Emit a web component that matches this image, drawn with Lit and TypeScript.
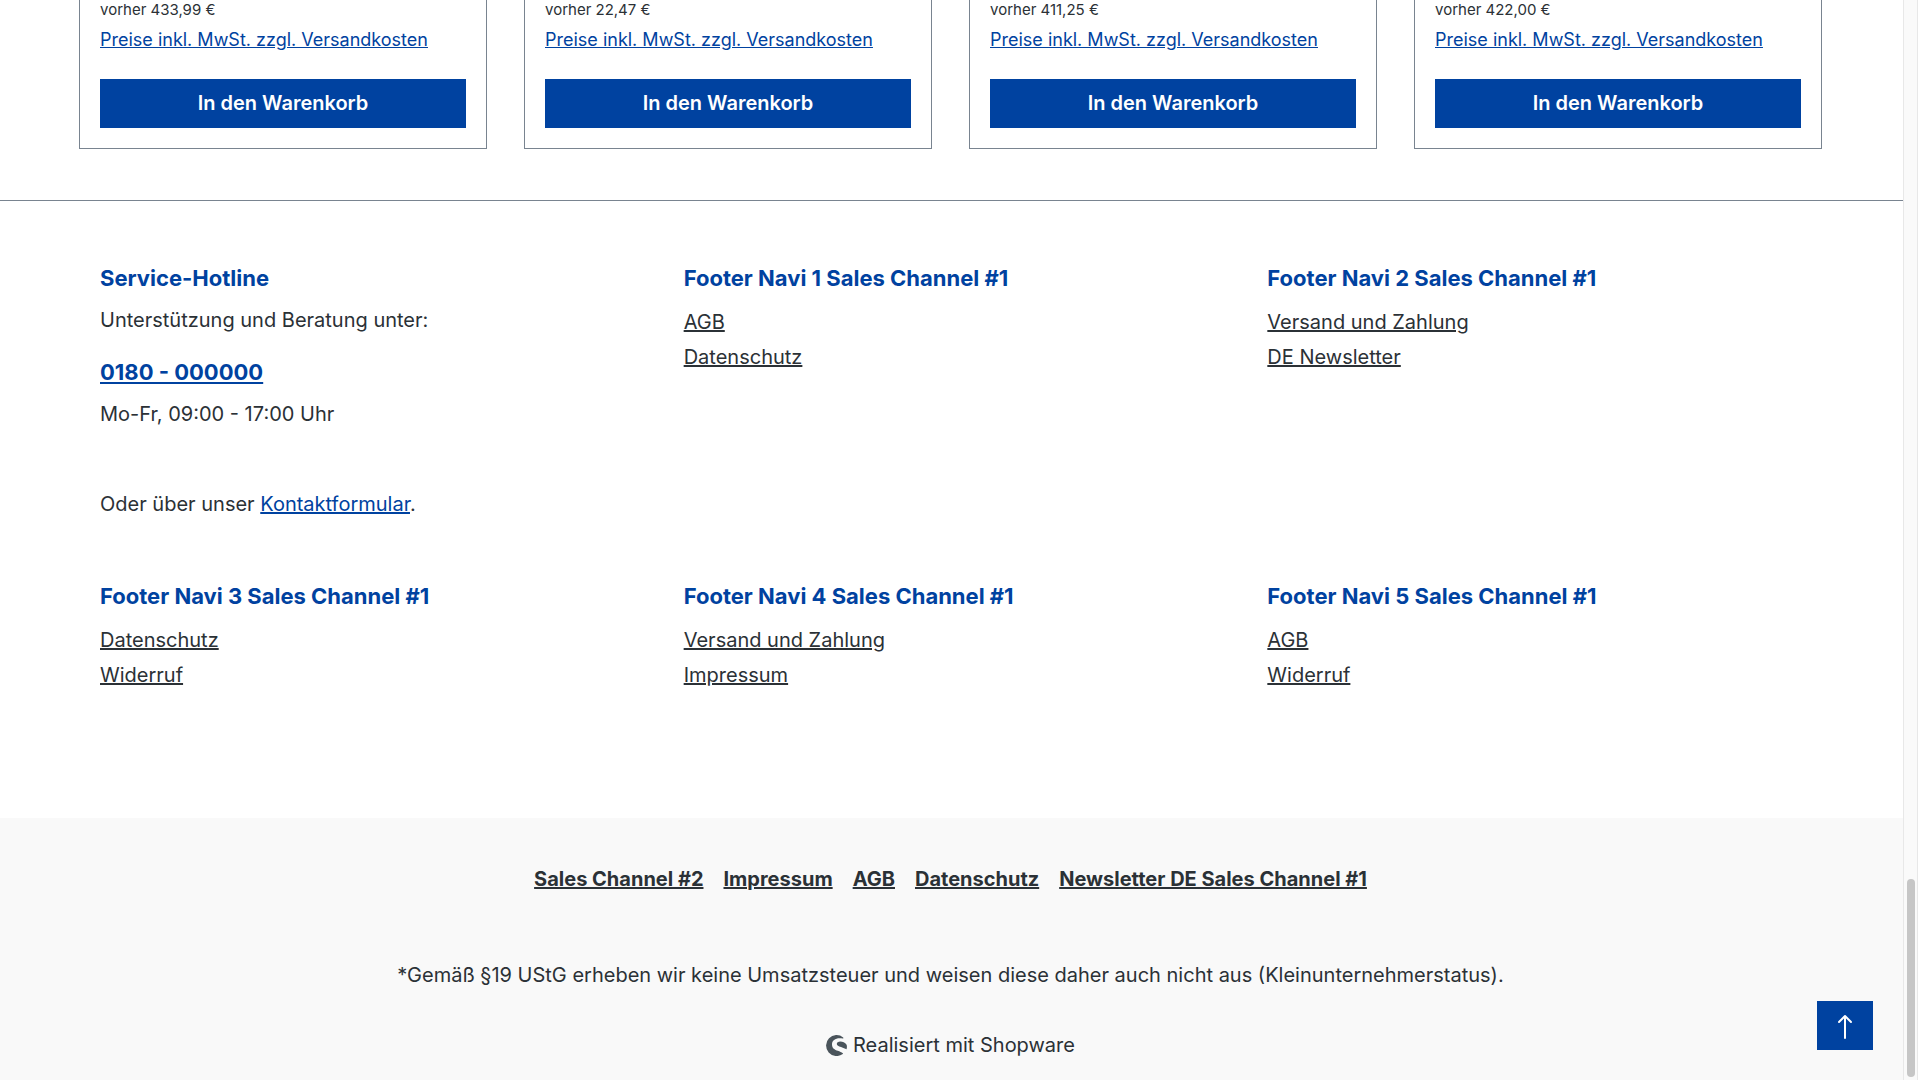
import { LitElement, html, css } from "lit";
import { customElement } from "lit/decorators.js";

const PRICES = ["433,99 €", "22,47 €", "411,25 €", "422,00 €"];

const NAVI = [
  { title: "Footer Navi 1 Sales Channel #1", links: ["AGB", "Datenschutz"] },
  { title: "Footer Navi 2 Sales Channel #1", links: ["Versand und Zahlung", "DE Newsletter"] },
  { title: "Footer Navi 3 Sales Channel #1", links: ["Datenschutz", "Widerruf"] },
  { title: "Footer Navi 4 Sales Channel #1", links: ["Versand und Zahlung", "Impressum"] },
  { title: "Footer Navi 5 Sales Channel #1", links: ["AGB", "Widerruf"] },
];

const SERVICE_LINKS = [
  "Sales Channel #2",
  "Impressum",
  "AGB",
  "Datenschutz",
  "Newsletter DE Sales Channel #1",
];

@customElement("app-root")
export class AppRoot extends LitElement {
  static styles = css`
    :host {
      display: grid;
      grid-template-columns: minmax(0, 1fr) 17px;
      min-height: 100vh;
      background: #fff;
      color: #2b3136;
      font: 400 20px/30px Inter, "Liberation Sans", sans-serif;
    }
    * {
      box-sizing: border-box;
    }
    p,
    h2,
    ul {
      margin: 0;
      padding: 0;
    }
    ul {
      list-style: none;
    }
    a {
      color: inherit;
    }
    .page {
      display: flex;
      flex-direction: column;
    }
    .products {
      display: grid;
      grid-template-columns: repeat(4, minmax(0, 1fr));
      gap: 37px;
      padding: 0 81px 51px 79px;
    }
    .card {
      display: flex;
      flex-direction: column;
      padding: 0 20px 20px;
      border: 1px solid #798490;
      border-top: 0;
    }
    .before {
      font-size: 15px;
      line-height: 20px;
    }
    .tax {
      margin-top: 8px;
      font-size: 18px;
      line-height: 24px;
    }
    .accent {
      color: #0042a0;
    }
    .buy {
      margin-top: 27px;
      height: 49px;
      padding: 0 0 2px;
      border: 0;
      border-radius: 0;
      background: #0042a0;
      color: #fff;
      font: 600 20px/30px Inter, "Liberation Sans", sans-serif;
    }
    .navi {
      display: grid;
      grid-template-columns: repeat(3, minmax(0, 1fr));
      row-gap: 61px;
      padding: 61px 76px 123px;
      border-top: 1px solid #798490;
    }
    .column {
      padding: 0 24px;
    }
    .title {
      font-size: 22px;
      line-height: 32px;
      font-weight: 700;
      color: #0042a0;
    }
    .list {
      padding-top: 13px;
    }
    .list li {
      height: 35px;
    }
    .hotline {
      padding-top: 11px;
    }
    .phone {
      display: block;
      width: fit-content;
      margin: 21px 0 11px;
      font-size: 22px;
      line-height: 32px;
      font-weight: 700;
      color: #0042a0;
    }
    .contact {
      margin-top: 60px;
    }
    .bottom {
      flex: 1;
      display: flex;
      flex-direction: column;
      align-items: center;
      padding: 46px 22px 18px 20px;
      background: #f9f9f9;
    }
    .service {
      display: flex;
      gap: 20px;
      font-weight: 700;
    }
    .note {
      margin-top: 66px;
    }
    .brand {
      display: flex;
      align-items: center;
      gap: 6px;
      margin-top: 40px;
    }
    .top {
      position: fixed;
      right: 47px;
      bottom: 30px;
      display: grid;
      place-items: center;
      width: 56px;
      height: 49px;
      padding: 0;
      border: 0;
      background: #0042a0;
    }
    .track {
      position: sticky;
      top: 0;
      display: flex;
      flex-direction: column;
      justify-content: flex-end;
      width: 15px;
      height: 100vh;
      padding: 3px;
      border: 1px solid #e8e8e8;
      border-width: 0 1px;
      background: #fafafa;
    }
    .thumb {
      width: 8px;
      height: 198px;
      border-radius: 4px;
      background: #c6c6c6;
    }
  `;

  render() {
    return html`
      <div class="page">
        <main class="products">
          ${PRICES.map(
            (price) => html`
              <article class="card">
                <p class="before">vorher ${price}</p>
                <p class="tax"><a class="accent" href="#">Preise inkl. MwSt. zzgl. Versandkosten</a></p>
                <button class="buy" type="button">In den Warenkorb</button>
              </article>
            `
          )}
        </main>
        <section class="navi">
          <div class="column">
            <h2 class="title">Service-Hotline</h2>
            <p class="hotline">Unterstützung und Beratung unter:</p>
            <a class="phone" href="tel:0180000000">0180 - 000000</a>
            <p>Mo-Fr, 09:00 - 17:00 Uhr</p>
            <p class="contact">Oder über unser <a class="accent" href="#">Kontaktformular</a>.</p>
          </div>
          ${NAVI.map(
            (group) => html`
              <nav class="column">
                <h2 class="title">${group.title}</h2>
                <ul class="list">
                  ${group.links.map((label) => html`<li><a href="#">${label}</a></li>`)}
                </ul>
              </nav>
            `
          )}
        </section>
        <footer class="bottom">
          <ul class="service">
            ${SERVICE_LINKS.map((label) => html`<li><a href="#">${label}</a></li>`)}
          </ul>
          <p class="note">
            *Gemäß §19 UStG erheben wir keine Umsatzsteuer und weisen diese daher auch nicht aus (Kleinunternehmerstatus).
          </p>
          <div class="brand">
            <svg width="21" height="21" viewBox="0 0 21 21" aria-hidden="true">
              <path
                fill="#4a545b"
                d="M17.200 2.400A10.500 10.500 0 1 0 16.800 19c.3-.2.2-.5 0-.7-1.200-1-3-1.700-5-2.500C8.800 14.600 6 13.200 6 9.400c0-3.700 3.200-6.100 7.600-6.100 1.200 0 2.200.1 3.200.3.500.1.800-.8.400-1.200Z"
              />
              <path
                fill="#4a545b"
                d="M20.600 9.800c-1.500-2-4-3.200-6.300-3.200-2 0-3.500.9-3.500 2.300 0 1.600 1.800 2.200 4.200 3 1.600.500 3.200 1.100 4.900 2.200.3.200.6.100.7-.2.400-1.400.500-2.700 0-4.100Z"
              />
            </svg>
            <span>Realisiert mit Shopware</span>
          </div>
        </footer>
      </div>
      <div class="track"><div class="thumb"></div></div>
      <button class="top" type="button" aria-label="Nach oben">
        <svg width="16" height="29" viewBox="0 0 16 29" fill="none" stroke="#fff" stroke-width="2" aria-hidden="true">
          <path d="M8 27V5M2 11l6-6 6 6" stroke-linecap="round" stroke-linejoin="round" />
        </svg>
      </button>
    `;
  }
}
